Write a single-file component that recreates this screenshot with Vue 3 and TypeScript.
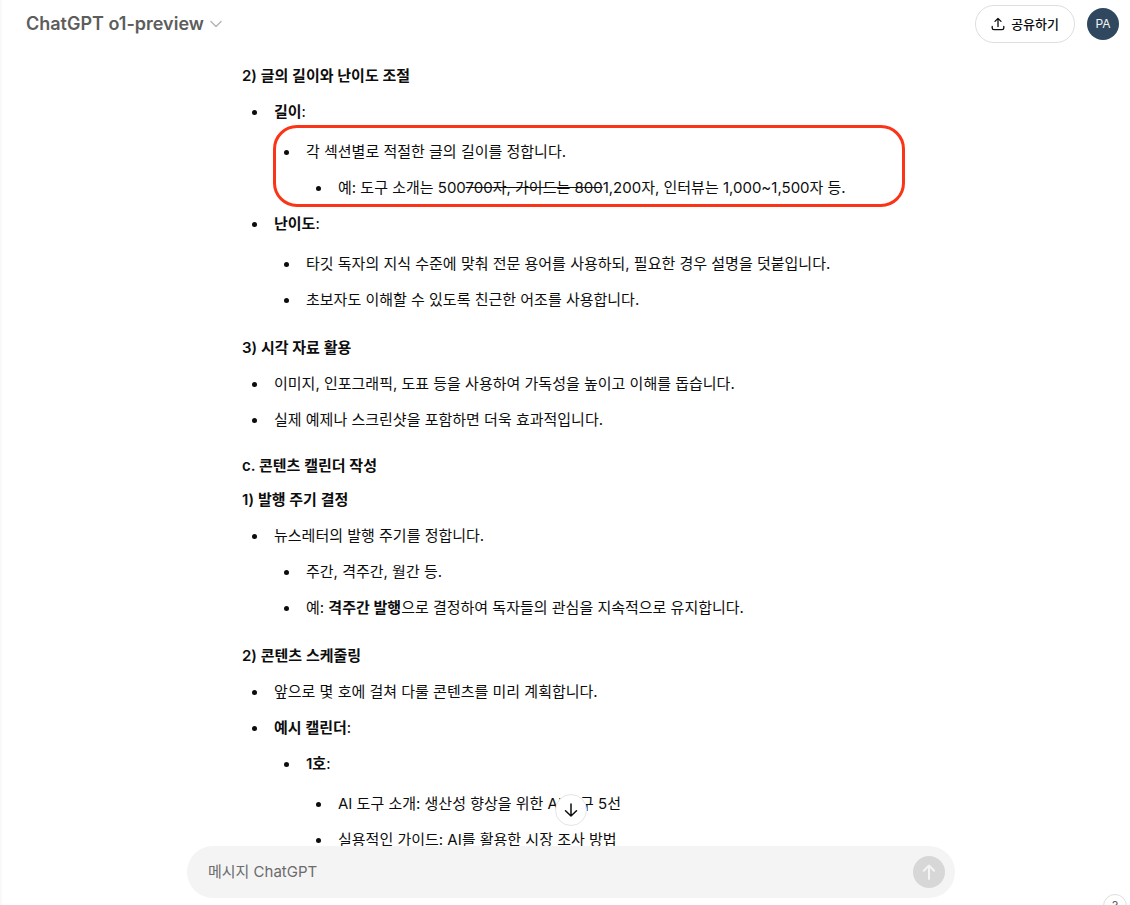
<script setup lang="ts">
import { ref } from 'vue'

interface Run {
  text: string
  style?: 'strong' | 'del'
}
interface Item {
  runs: Run[]
  spaced?: boolean
  highlighted?: boolean
  children?: Item[]
}
interface Section {
  level: 'h3' | 'h4'
  title: string
  items: Item[]
}

const message = ref('')

const sections: Section[] = [
  {
    level: 'h4',
    title: '2) 글의 길이와 난이도 조절',
    items: [
      {
        runs: [{ text: '길이', style: 'strong' }, { text: ':' }],
        spaced: true,
        highlighted: true,
        children: [
          {
            runs: [{ text: '각 섹션별로 적절한 글의 길이를 정합니다.' }],
            children: [
              {
                runs: [
                  { text: '예: 도구 소개는 500' },
                  { text: '700자, 가이드는 800', style: 'del' },
                  { text: '1,200자, 인터뷰는 1,000~1,500자 등.' },
                ],
              },
            ],
          },
        ],
      },
      {
        runs: [{ text: '난이도', style: 'strong' }, { text: ':' }],
        spaced: true,
        children: [
          { runs: [{ text: '타깃 독자의 지식 수준에 맞춰 전문 용어를 사용하되, 필요한 경우 설명을 덧붙입니다.' }] },
          { runs: [{ text: '초보자도 이해할 수 있도록 친근한 어조를 사용합니다.' }] },
        ],
      },
    ],
  },
  {
    level: 'h4',
    title: '3) 시각 자료 활용',
    items: [
      { runs: [{ text: '이미지, 인포그래픽, 도표 등을 사용하여 가독성을 높이고 이해를 돕습니다.' }] },
      { runs: [{ text: '실제 예제나 스크린샷을 포함하면 더욱 효과적입니다.' }] },
    ],
  },
  { level: 'h3', title: 'c. 콘텐츠 캘린더 작성', items: [] },
  {
    level: 'h4',
    title: '1) 발행 주기 결정',
    items: [
      {
        runs: [{ text: '뉴스레터의 발행 주기를 정합니다.' }],
        children: [
          { runs: [{ text: '주간, 격주간, 월간 등.' }] },
          {
            runs: [
              { text: '예: ' },
              { text: '격주간 발행', style: 'strong' },
              { text: '으로 결정하여 독자들의 관심을 지속적으로 유지합니다.' },
            ],
          },
        ],
      },
    ],
  },
  {
    level: 'h4',
    title: '2) 콘텐츠 스케줄링',
    items: [
      { runs: [{ text: '앞으로 몇 호에 걸쳐 다룰 콘텐츠를 미리 계획합니다.' }] },
      {
        runs: [{ text: '예시 캘린더', style: 'strong' }, { text: ':' }],
        children: [
          {
            runs: [{ text: '1호', style: 'strong' }, { text: ':' }],
            spaced: true,
            children: [
              { runs: [{ text: 'AI 도구 소개: 생산성 향상을 위한 AI 도구 5선' }] },
              { runs: [{ text: '실용적인 가이드: AI를 활용한 시장 조사 방법' }] },
            ],
          },
        ],
      },
    ],
  },
]
</script>

<template>
  <div class="app">
    <header class="topbar">
      <button class="model" type="button">
        ChatGPT o1-preview
        <svg width="12" height="8" viewBox="0 0 12 8" fill="none" stroke="#b4b4b4" stroke-width="1.4" stroke-linecap="round" stroke-linejoin="round" aria-hidden="true">
          <path d="M1 1.5l5 5 5-5" />
        </svg>
      </button>
      <div class="actions">
        <button class="share" type="button">
          <svg width="14" height="14" viewBox="0 0 14 14" fill="none" stroke="#0d0d0d" stroke-width="1.3" stroke-linecap="round" stroke-linejoin="round" aria-hidden="true">
            <path d="M7 9.500V1.500M4 4.400L7 1.400l3 3M1.200 9.500v1.400c0 1.100.7 1.800 1.800 1.800h8c1.100 0 1.800-.7 1.800-1.800V9.500" />
          </svg>
          공유하기
        </button>
        <button class="avatar" type="button" aria-label="PA">PA</button>
      </div>
    </header>

    <main class="thread">
      <article class="column">
        <section v-for="section in sections" :key="section.title">
          <component :is="section.level" class="title" :class="section.level">{{ section.title }}</component>
          <ul v-if="section.items.length">
            <li v-for="(item, i) in section.items" :key="i">
              <p><component :is="run.style ?? 'span'" v-for="(run, r) in item.runs" :key="r">{{ run.text }}</component></p>
              <ul v-if="item.children" :class="{ spaced: item.spaced, highlighted: item.highlighted }">
                <li v-for="(child, j) in item.children" :key="j">
                  <p><component :is="run.style ?? 'span'" v-for="(run, r) in child.runs" :key="r">{{ run.text }}</component></p>
                  <ul v-if="child.children" :class="{ spaced: child.spaced }">
                    <li v-for="(leaf, k) in child.children" :key="k">
                      <p><component :is="run.style ?? 'span'" v-for="(run, r) in leaf.runs" :key="r">{{ run.text }}</component></p>
                    </li>
                  </ul>
                </li>
              </ul>
            </li>
          </ul>
        </section>
      </article>
    </main>

    <footer class="dock">
      <form class="composer" @submit.prevent>
        <button class="jump" type="button" aria-label="맨 아래로">
          <svg width="16" height="16" viewBox="0 0 16 16" fill="none" stroke="#0d0d0d" stroke-width="1.5" stroke-linecap="round" stroke-linejoin="round" aria-hidden="true">
            <path d="M8 2v12M2.500 8.700L8 14l5.500-5.300" />
          </svg>
        </button>
        <input v-model="message" type="text" placeholder="메시지 ChatGPT" aria-label="메시지 ChatGPT" />
        <button class="send" type="submit" aria-label="보내기">
          <svg width="16" height="18" viewBox="0 0 16 18" fill="none" stroke="#f4f4f4" stroke-width="2" stroke-linecap="round" stroke-linejoin="round" aria-hidden="true">
            <path d="M8 16V2.500M2.800 7.700L8 2.500l5.200 5.200" />
          </svg>
        </button>
      </form>
    </footer>

    <button class="help" type="button" aria-label="도움말">?</button>
  </div>
</template>

<style>
body {
  margin: 0;
  background: #fff;
}
</style>

<style scoped>
.app {
  position: relative;
  display: flex;
  flex-direction: column;
  box-sizing: border-box;
  height: 100vh;
  overflow: hidden;
  border-left: 2px solid #f9f9f9;
  color: #0d0d0d;
  font-family: Inter, "Noto Sans CJK KR", sans-serif;
  font-size: 15px;
  line-height: 28px;
}
button,
input {
  font: inherit;
  color: inherit;
  margin: 0;
  padding: 0;
  border: 0;
  background: none;
}
button {
  display: flex;
  align-items: center;
  justify-content: center;
  cursor: pointer;
}
svg {
  display: block;
  flex: none;
}
.topbar {
  display: flex;
  flex: none;
  align-items: center;
  justify-content: space-between;
  height: 48px;
  padding: 0 11px 0 24px;
}
.model {
  gap: 6px;
  color: #5d5d5d;
  font-size: 18px;
  font-weight: 600;
}
.actions {
  display: flex;
  align-items: center;
  gap: 12px;
}
.share {
  box-sizing: border-box;
  gap: 6px;
  height: 38px;
  padding: 0 15px;
  border: 1px solid #dedede;
  border-radius: 19px;
  font-size: 13px;
  font-weight: 500;
}
.avatar {
  width: 32px;
  height: 32px;
  border-radius: 50%;
  background: #30485f;
  color: #f0f3f5;
  font-size: 12px;
}
.thread {
  flex: 1;
  min-height: 0;
  overflow: hidden;
  padding: 14px 0 0 10px;
}
.column {
  box-sizing: border-box;
  max-width: 768px;
  margin: 0 auto;
  padding: 0 50px 0 55px;
}
.title {
  margin: 0;
  font-size: 15px;
  font-weight: 600;
}
section + section .h4 {
  margin-top: 20px;
}
section + section .h3 {
  margin-top: 18px;
  margin-bottom: -14px;
}
ul {
  position: relative;
  display: flex;
  flex-direction: column;
  gap: 8px;
  margin: 8px 0 0;
  padding: 0;
  list-style: none;
}
ul.spaced {
  margin-top: 12px;
}
li {
  position: relative;
  padding-left: 32px;
}
li::before {
  content: "";
  position: absolute;
  top: 12px;
  left: 10px;
  width: 5px;
  height: 5px;
  border-radius: 50%;
  background: #0d0d0d;
}
.highlighted::after {
  content: "";
  position: absolute;
  inset: -13px 0 -5px -1px;
  border: 3px solid #fb3417;
  border-radius: 24px;
  pointer-events: none;
}
p {
  margin: 0;
}
strong {
  font-weight: 600;
}
.dock {
  flex: none;
  padding: 0 0 7px 10px;
  background: #fff;
}
.composer {
  position: relative;
  display: flex;
  align-items: center;
  box-sizing: border-box;
  max-width: 768px;
  height: 52px;
  margin: 0 auto;
  padding: 0 10px 0 21px;
  border-radius: 26px;
  background: #f4f4f4;
}
.composer input {
  flex: 1;
  min-width: 0;
  outline: none;
}
.composer input::placeholder {
  color: #6b6b6b;
  opacity: 1;
}
.send {
  width: 32px;
  height: 32px;
  border-radius: 50%;
  background: #d7d7d7;
}
.jump {
  position: absolute;
  top: -52px;
  left: calc(50% - 16px);
  box-sizing: border-box;
  width: 32px;
  height: 32px;
  border: 1px solid #e5e5e5;
  border-radius: 50%;
  background: #fff;
}
.help {
  position: absolute;
  right: 3px;
  bottom: -13px;
  box-sizing: border-box;
  width: 24px;
  height: 24px;
  border: 1px solid #dedede;
  border-radius: 50%;
  background: #fff;
  color: #5d5d5d;
  font-size: 12px;
}
</style>
